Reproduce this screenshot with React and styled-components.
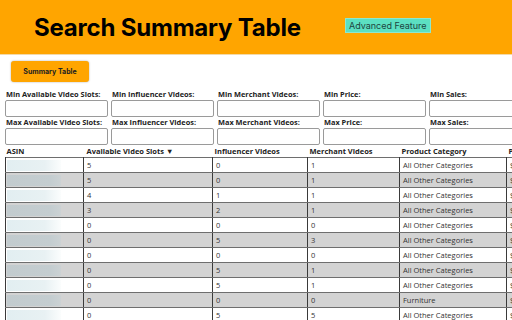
import React from "react";
import styled, { createGlobalStyle } from "styled-components";

const Global = createGlobalStyle`
  html, body { margin: 0; padding: 0; background: #fff; overflow: hidden; }
  body { width: 512px; height: 320px; font-family: "Open Sans", "Noto Sans", sans-serif; }
`;

const Header = styled.header`
  height: 55px;
  background: #ffa500;
  display: flex;
  align-items: center;
  padding-left: 34px;
  gap: 44px;
  border-bottom: 1px solid #f3d9a8;
  box-sizing: border-box;
`;

const Title = styled.h1`
  margin: 0;
  font-family: Inter, "Liberation Sans", sans-serif;
  font-weight: 700;
  font-size: 24px;
  color: #000;
  letter-spacing: -0.2px;
`;

const Badge = styled.span`
  background: #5ce0c2;
  border: 1px solid #8ee8cf;
  color: #1d4540;
  font-family: Inter, "Liberation Sans", sans-serif;
  font-size: 9px;
  padding: 1px 3px;
  line-height: 11px;
  margin-top: -3px;
`;

const ButtonBar = styled.div`
  padding: 6px 11px 0;
  display: flex;
`;

const TabButton = styled.button`
  height: 21px;
  width: 78px;
  background: #ffa500;
  border: none;
  border-radius: 3px;
  box-shadow: 0 0 2px rgba(0, 0, 0, 0.35);
  font-family: Inter, "Liberation Sans", sans-serif;
  font-weight: 700;
  font-size: 7px;
  color: #222;
  padding: 0;
`;

const Filters = styled.div`
  margin-top: 7px;
  padding-left: 5px;
  display: grid;
  grid-template-columns: repeat(5, 103px);
  column-gap: 3px;
  width: 600px;
`;

const Field = styled.div`
  display: flex;
  flex-direction: column;
`;

const Label = styled.label`
  height: 10px;
  line-height: 10px;
  padding-left: 1px;
  font-size: 7.4px;
  font-weight: 700;
  color: #222;
  white-space: nowrap;
`;

const Input = styled.input`
  margin-top: 1px;
  height: 17px;
  box-sizing: border-box;
  border: 1px solid #9a9a9a;
  border-radius: 2px;
  width: 103px;
  padding: 0;
`;

const Table = styled.table`
  border-collapse: collapse;
  margin-left: 5px;
  table-layout: fixed;
  width: 620px;
  font-size: 7.5px;
  color: #333;
`;

const Th = styled.th`
  text-align: left;
  font-weight: 700;
  color: #222;
  height: 12px;
  padding: 0 0 0 ${(p) => p.$pl || 1}px;
  white-space: nowrap;
  line-height: 12px;
`;

const Tr = styled.tr`
  background: ${(p) => (p.$alt ? "#d3d3d3" : "#fff")};
`;

const Td = styled.td`
  height: 14px;
  padding: 0 0 0 3px;
  border-top: 1px solid #6e6e6e;
  border-bottom: 1px solid #6e6e6e;
  border-left: 1px solid #3a3a3a;
  border-right: 1px solid #3a3a3a;
  white-space: nowrap;
  overflow: hidden;
  line-height: 13px;
`;

const Blur = styled.div`
  width: 54px;
  height: 11px;
  margin-left: -2px;
  background: ${(p) =>
    p.$alt
      ? "linear-gradient(90deg, #c2cbce 0%, #c4cdd0 80%, #ccd2d4 100%)"
      : "linear-gradient(90deg, #e2eef1 0%, #e8f1f3 70%, #fbfdfd 100%)"};
`;

const cols = [78, 129, 95, 92, 107, 119];

const rows = [
  [5, 0, 1, "All Other Categories"],
  [5, 0, 1, "All Other Categories"],
  [4, 1, 1, "All Other Categories"],
  [3, 2, 1, "All Other Categories"],
  [0, 0, 0, "All Other Categories"],
  [0, 5, 3, "All Other Categories"],
  [0, 0, 0, "All Other Categories"],
  [0, 5, 1, "All Other Categories"],
  [0, 5, 1, "All Other Categories"],
  [0, 0, 0, "Furniture"],
  [0, 5, 5, "All Other Categories"],
];

const minLabels = ["Min Available Video Slots:", "Min Influencer Videos:", "Min Merchant Videos:", "Min Price:", "Min Sales:"];
const maxLabels = ["Max Available Video Slots:", "Max Influencer Videos:", "Max Merchant Videos:", "Max Price:", "Max Sales:"];

export default function App() {
  return (
    <>
      <Global />
      <Header>
        <Title>Search Summary Table</Title>
        <Badge>Advanced Feature</Badge>
      </Header>
      <ButtonBar>
        <TabButton>Summary Table</TabButton>
      </ButtonBar>
      <Filters>
        {minLabels.map((l) => (
          <Field key={l}>
            <Label>{l}</Label>
            <Input />
          </Field>
        ))}
        {maxLabels.map((l) => (
          <Field key={l}>
            <Label>{l}</Label>
            <Input />
          </Field>
        ))}
      </Filters>
      <Table>
        <colgroup>
          {cols.map((w, i) => (
            <col key={i} style={{ width: w }} />
          ))}
        </colgroup>
        <thead>
          <tr>
            <Th>ASIN</Th>
            <Th $pl={3}>Available Video Slots ▼</Th>
            <Th $pl={2}>Influencer Videos</Th>
            <Th $pl={2}>Merchant Videos</Th>
            <Th $pl={2}>Product Category</Th>
            <Th $pl={2}>Price</Th>
          </tr>
        </thead>
        <tbody>
          {rows.map((r, i) => (
            <Tr key={i} $alt={i % 2 === 1}>
              <Td>
                <Blur $alt={i % 2 === 1} />
              </Td>
              <Td>{r[0]}</Td>
              <Td>{r[1]}</Td>
              <Td>{r[2]}</Td>
              <Td>{r[3]}</Td>
              <Td>$</Td>
            </Tr>
          ))}
        </tbody>
      </Table>
    </>
  );
}
